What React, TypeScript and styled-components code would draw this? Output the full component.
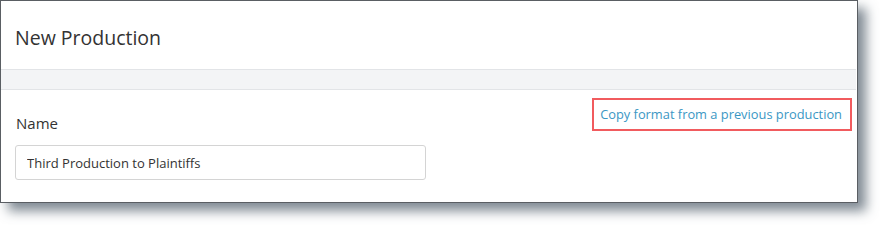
import React from "react";
import styled, { createGlobalStyle } from "styled-components";

const Global = createGlobalStyle`
  html, body { margin: 0; padding: 0; background: #ffffff; }
  body { font-family: "Open Sans", "Liberation Sans", Arial, sans-serif; }
`;

const Page = styled.div`
  width: 880px;
  height: 225px;
  background: #ffffff;
`;

const Frame = styled.div`
  box-sizing: border-box;
  width: 858px;
  height: 203px;
  border: 1px solid #5a5e63;
  background: #ffffff;
  box-shadow: 8px 8px 11px rgba(70, 84, 98, 0.68);
  display: flex;
  flex-direction: column;
`;

const Header = styled.div`
  height: 68px;
  box-sizing: border-box;
  padding: 24px 14px 0;
`;

const Title = styled.h1`
  margin: 0;
  font-size: 19.5px;
  line-height: 26px;
  font-weight: 400;
  color: #333333;
`;

const Band = styled.div`
  height: 19px;
  background: #f3f4f6;
  border-top: 1px solid #e2e4e7;
  border-bottom: 1px solid #e2e4e7;
  margin-right: 1px;
`;

const Body = styled.div`
  display: flex;
  justify-content: space-between;
  align-items: flex-start;
  padding: 0 5px 0 14px;
`;

const Field = styled.div`
  display: flex;
  flex-direction: column;
  padding-top: 23px;
`;

const Label = styled.label`
  font-size: 15px;
  line-height: 20px;
  color: #333333;
  padding-left: 1px;
  margin-bottom: 12px;
`;

const Input = styled.input`
  box-sizing: border-box;
  width: 411px;
  height: 35px;
  border: 1px solid #d4d4d4;
  border-radius: 3px;
  padding: 0 11px;
  font-family: "Open Sans", "Liberation Sans", Arial, sans-serif;
  font-size: 13px;
  color: #333333;
  background: #ffffff;
  outline: none;
`;

const LinkBox = styled.div`
  margin-top: 8px;
  border: 2px solid #f15b5e;
  padding: 6px 8px 6px 6px;
`;

const Link = styled.a`
  display: block;
  font-size: 12.85px;
  line-height: 17px;
  color: #3b97c4;
  text-decoration: none;
  cursor: pointer;
`;

export default function App() {
  return (
    <Page>
      <Global />
      <Frame>
        <Header>
          <Title>New Production</Title>
        </Header>
        <Band />
        <Body>
          <Field>
            <Label htmlFor="name">Name</Label>
            <Input id="name" defaultValue="Third Production to Plaintiffs" />
          </Field>
          <LinkBox>
            <Link>Copy format from a previous production</Link>
          </LinkBox>
        </Body>
      </Frame>
    </Page>
  );
}
